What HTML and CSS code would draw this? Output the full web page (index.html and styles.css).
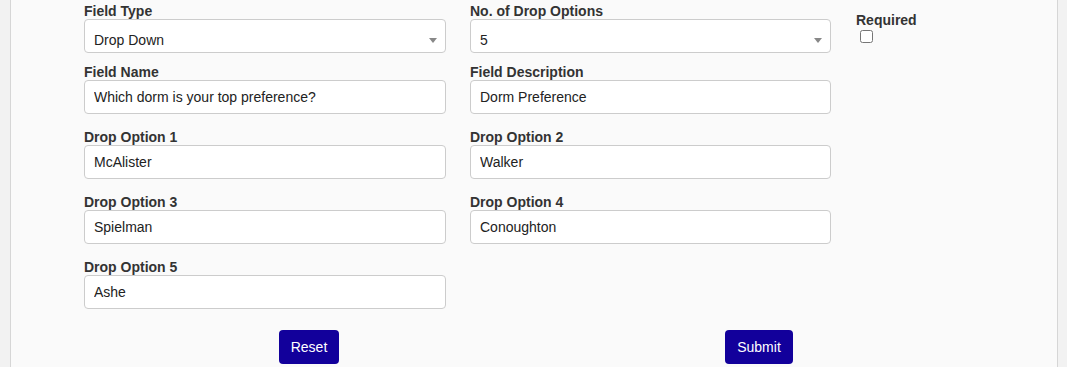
FILE: index.html
```html
<!DOCTYPE html>
<html lang="en">
<head>
    <meta charset="UTF-8">
    <meta name="viewport" content="width=device-width, initial-scale=1.0">
    <title>Edit Field</title>
    <link rel="stylesheet" href="styles.css">
</head>
<body>

<div class="panel">
    <form class="field-form">
        <div class="form-row first">
            <div class="form-group">
                <label>Field Type</label>
                <div class="select-wrap">
                    <select class="form-control">
                        <option>Drop Down</option>
                    </select>
                </div>
            </div>
            <div class="form-group">
                <label>No. of Drop Options</label>
                <div class="select-wrap">
                    <select class="form-control">
                        <option>5</option>
                    </select>
                </div>
            </div>
            <div class="form-group required">
                <label>Required</label>
                <input type="checkbox" class="check">
            </div>
        </div>

        <div class="form-row">
            <div class="form-group">
                <label>Field Name</label>
                <input type="text" class="form-control" value="Which dorm is your top preference?">
            </div>
            <div class="form-group">
                <label>Field Description</label>
                <input type="text" class="form-control" value="Dorm Preference">
            </div>
        </div>

        <div class="form-row">
            <div class="form-group">
                <label>Drop Option 1</label>
                <input type="text" class="form-control" value="McAlister">
            </div>
            <div class="form-group">
                <label>Drop Option 2</label>
                <input type="text" class="form-control" value="Walker">
            </div>
        </div>

        <div class="form-row">
            <div class="form-group">
                <label>Drop Option 3</label>
                <input type="text" class="form-control" value="Spielman">
            </div>
            <div class="form-group">
                <label>Drop Option 4</label>
                <input type="text" class="form-control" value="Conoughton">
            </div>
        </div>

        <div class="form-row">
            <div class="form-group">
                <label>Drop Option 5</label>
                <input type="text" class="form-control" value="Ashe">
            </div>
        </div>

        <div class="button-row">
            <div class="button-cell"><button type="reset" class="btn">Reset</button></div>
            <div class="button-cell"><button type="button" class="btn">Submit</button></div>
        </div>
    </form>
</div>

</body>
</html>
```

FILE: styles.css
```css
body {
    font-family: "Liberation Sans", Arial, sans-serif;
    font-size: 14px;
    background-color: #f2f2f2;
    color: #333;
    margin: 0;
}
.panel {
    background-color: #fafafa;
    border-left: 1px solid #d6d6d6;
    border-right: 1px solid #d6d6d6;
    margin: 0 9px 0 10px;
    padding-top: 3px;
    height: 364px;
    overflow: hidden;
}
.field-form {
    width: 900px;
    margin: 0 auto;
}
.form-row {
    display: grid;
    grid-template-columns: 362px 361px 1fr;
    column-gap: 24px;
}
.form-group {
    margin-bottom: 15px;
}
.form-row.first .form-group {
    margin-bottom: 11px;
}
.form-group label {
    display: block;
    font-weight: bold;
    line-height: 16px;
    color: #333;
}
.form-control {
    display: block;
    box-sizing: border-box;
    width: 100%;
    height: 34px;
    padding: 0 9px;
    font-family: inherit;
    font-size: 14px;
    color: #222;
    background-color: #fff;
    border: 1px solid #ccc;
    border-radius: 4px;
    outline: none;
}
select.form-control {
    appearance: none;
    -webkit-appearance: none;
    padding-top: 7px;
}
.select-wrap {
    position: relative;
}
.select-wrap::after {
    content: "";
    position: absolute;
    right: 9px;
    top: 19px;
    border-left: 4px solid transparent;
    border-right: 4px solid transparent;
    border-top: 5px solid #888;
    pointer-events: none;
}
.required {
    padding-top: 9px;
}
.check {
    display: block;
    width: 13px;
    height: 13px;
    margin: 2px 0 0 5px;
}
.required label {
    padding-left: 1px;
}
.button-row {
    display: flex;
    margin-top: 6px;
}
.button-cell {
    flex: 1;
    text-align: center;
}
.btn {
    font-family: inherit;
    font-size: 14px;
    line-height: 20px;
    padding: 7px 12px;
    color: #fff;
    background-color: #12009b;
    border: none;
    border-radius: 4px;
    cursor: pointer;
}
```
